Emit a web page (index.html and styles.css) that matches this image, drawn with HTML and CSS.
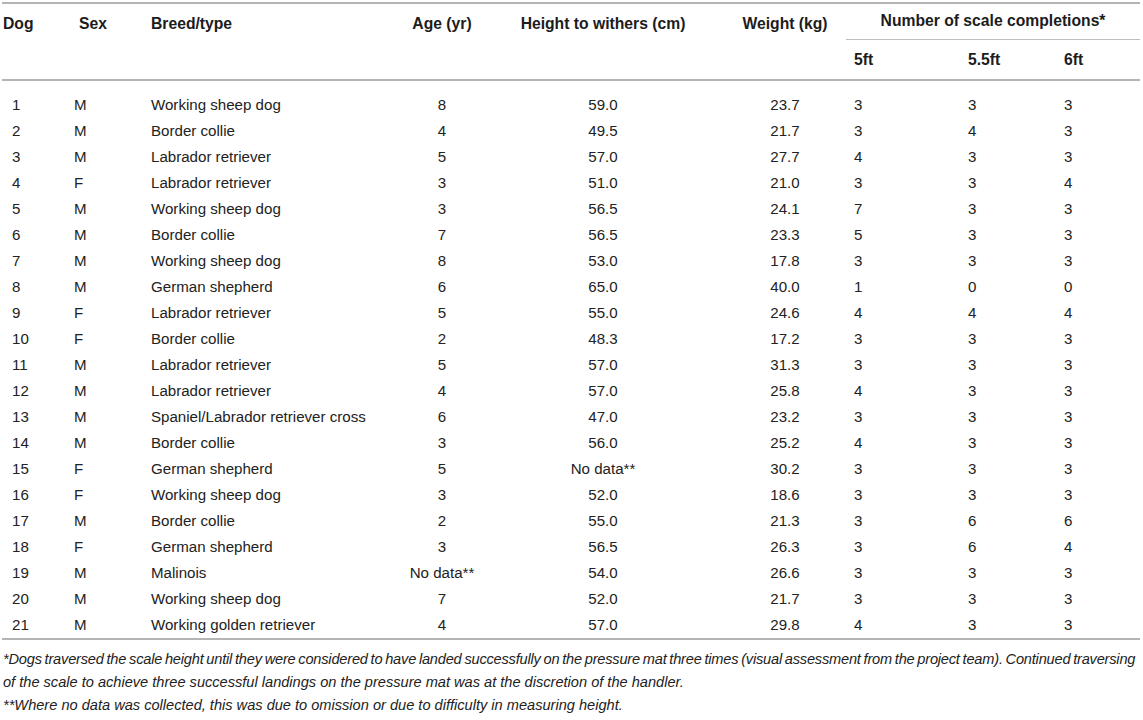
FILE: index.html
```html
<!DOCTYPE html>
<html lang="en">
<head>
<meta charset="utf-8">
<title>Dog data</title>
<link rel="stylesheet" href="styles.css">
</head>
<body>
<div class="page">
<table class="data">
  <colgroup>
    <col class="c-dog"><col class="c-sex"><col class="c-breed"><col class="c-age"><col class="c-height"><col class="c-weight"><col class="c-s1"><col class="c-s2"><col class="c-s3">
  </colgroup>
  <thead>
    <tr class="h1">
      <th rowspan="2" class="l first">Dog</th>
      <th rowspan="2" class="l sex">Sex</th>
      <th rowspan="2" class="l">Breed/type</th>
      <th rowspan="2" class="c">Age (yr)</th>
      <th rowspan="2" class="c">Height to withers (cm)</th>
      <th rowspan="2" class="c">Weight (kg)</th>
      <th colspan="3" class="group">Number of scale completions*</th>
    </tr>
    <tr class="h2">
      <th class="s">5ft</th>
      <th class="s">5.5ft</th>
      <th class="s">6ft</th>
    </tr>
  </thead>
  <tbody>
    <tr><td class="n">1</td><td class="l">M</td><td class="l">Working sheep dog</td><td class="c">8</td><td class="c">59.0</td><td class="c">23.7</td><td class="s">3</td><td class="s">3</td><td class="s">3</td></tr>
    <tr><td class="n">2</td><td class="l">M</td><td class="l">Border collie</td><td class="c">4</td><td class="c">49.5</td><td class="c">21.7</td><td class="s">3</td><td class="s">4</td><td class="s">3</td></tr>
    <tr><td class="n">3</td><td class="l">M</td><td class="l">Labrador retriever</td><td class="c">5</td><td class="c">57.0</td><td class="c">27.7</td><td class="s">4</td><td class="s">3</td><td class="s">3</td></tr>
    <tr><td class="n">4</td><td class="l">F</td><td class="l">Labrador retriever</td><td class="c">3</td><td class="c">51.0</td><td class="c">21.0</td><td class="s">3</td><td class="s">3</td><td class="s">4</td></tr>
    <tr><td class="n">5</td><td class="l">M</td><td class="l">Working sheep dog</td><td class="c">3</td><td class="c">56.5</td><td class="c">24.1</td><td class="s">7</td><td class="s">3</td><td class="s">3</td></tr>
    <tr><td class="n">6</td><td class="l">M</td><td class="l">Border collie</td><td class="c">7</td><td class="c">56.5</td><td class="c">23.3</td><td class="s">5</td><td class="s">3</td><td class="s">3</td></tr>
    <tr><td class="n">7</td><td class="l">M</td><td class="l">Working sheep dog</td><td class="c">8</td><td class="c">53.0</td><td class="c">17.8</td><td class="s">3</td><td class="s">3</td><td class="s">3</td></tr>
    <tr><td class="n">8</td><td class="l">M</td><td class="l">German shepherd</td><td class="c">6</td><td class="c">65.0</td><td class="c">40.0</td><td class="s">1</td><td class="s">0</td><td class="s">0</td></tr>
    <tr><td class="n">9</td><td class="l">F</td><td class="l">Labrador retriever</td><td class="c">5</td><td class="c">55.0</td><td class="c">24.6</td><td class="s">4</td><td class="s">4</td><td class="s">4</td></tr>
    <tr><td class="n">10</td><td class="l">F</td><td class="l">Border collie</td><td class="c">2</td><td class="c">48.3</td><td class="c">17.2</td><td class="s">3</td><td class="s">3</td><td class="s">3</td></tr>
    <tr><td class="n">11</td><td class="l">M</td><td class="l">Labrador retriever</td><td class="c">5</td><td class="c">57.0</td><td class="c">31.3</td><td class="s">3</td><td class="s">3</td><td class="s">3</td></tr>
    <tr><td class="n">12</td><td class="l">M</td><td class="l">Labrador retriever</td><td class="c">4</td><td class="c">57.0</td><td class="c">25.8</td><td class="s">4</td><td class="s">3</td><td class="s">3</td></tr>
    <tr><td class="n">13</td><td class="l">M</td><td class="l">Spaniel/Labrador retriever cross</td><td class="c">6</td><td class="c">47.0</td><td class="c">23.2</td><td class="s">3</td><td class="s">3</td><td class="s">3</td></tr>
    <tr><td class="n">14</td><td class="l">M</td><td class="l">Border collie</td><td class="c">3</td><td class="c">56.0</td><td class="c">25.2</td><td class="s">4</td><td class="s">3</td><td class="s">3</td></tr>
    <tr><td class="n">15</td><td class="l">F</td><td class="l">German shepherd</td><td class="c">5</td><td class="c">No data**</td><td class="c">30.2</td><td class="s">3</td><td class="s">3</td><td class="s">3</td></tr>
    <tr><td class="n">16</td><td class="l">F</td><td class="l">Working sheep dog</td><td class="c">3</td><td class="c">52.0</td><td class="c">18.6</td><td class="s">3</td><td class="s">3</td><td class="s">3</td></tr>
    <tr><td class="n">17</td><td class="l">M</td><td class="l">Border collie</td><td class="c">2</td><td class="c">55.0</td><td class="c">21.3</td><td class="s">3</td><td class="s">6</td><td class="s">6</td></tr>
    <tr><td class="n">18</td><td class="l">F</td><td class="l">German shepherd</td><td class="c">3</td><td class="c">56.5</td><td class="c">26.3</td><td class="s">3</td><td class="s">6</td><td class="s">4</td></tr>
    <tr><td class="n">19</td><td class="l">M</td><td class="l">Malinois</td><td class="c">No data**</td><td class="c">54.0</td><td class="c">26.6</td><td class="s">3</td><td class="s">3</td><td class="s">3</td></tr>
    <tr><td class="n">20</td><td class="l">M</td><td class="l">Working sheep dog</td><td class="c">7</td><td class="c">52.0</td><td class="c">21.7</td><td class="s">3</td><td class="s">3</td><td class="s">3</td></tr>
    <tr><td class="n">21</td><td class="l">M</td><td class="l">Working golden retriever</td><td class="c">4</td><td class="c">57.0</td><td class="c">29.8</td><td class="s">4</td><td class="s">3</td><td class="s">3</td></tr>
  </tbody>
</table>
<div class="notes">
  <p><span class="line">*Dogs traversed the scale height until they were considered to have landed successfully on the pressure mat three times (visual assessment from the project team). Continued traversing</span><br>of the scale to achieve three successful landings on the pressure mat was at the discretion of the handler.</p>
  <p>**Where no data was collected, this was due to omission or due to difficulty in measuring height.</p>
</div>
</div>
</body>
</html>
```

FILE: styles.css
```css
html, body {
  margin: 0;
  padding: 0;
  background: #ffffff;
}

.page {
  padding: 2px 3px 0 2px;
  font-family: "Liberation Sans", Arial, sans-serif;
  color: #222222;
}

.data {
  width: 1138px;
  border-collapse: collapse;
  table-layout: fixed;
  font-size: 15.1px;
}

.c-dog { width: 71px; }
.c-sex { width: 77px; }
.c-breed { width: 252px; }
.c-age { width: 80px; }
.c-height { width: 242px; }
.c-weight { width: 122px; }
.c-s1 { width: 114px; }
.c-s2 { width: 96px; }
.c-s3 { width: 84px; }

.data thead {
  border-top: 2px solid #b4b4b4;
  border-bottom: 2px solid #b4b4b4;
}

.data th {
  font-weight: bold;
  font-size: 15.7px;
  color: #1c1c1c;
  line-height: 18px;
  white-space: nowrap;
}

.data th.l, .data th.c {
  vertical-align: top;
  padding: 11px 0 0 1px;
}

.data th.sex {
  padding-left: 6px;
}

.data th.c {
  text-align: center;
  padding-left: 0;
}

.data th.l {
  text-align: left;
}

.h1 .group {
  height: 36px;
  box-sizing: border-box;
  padding: 0;
  text-align: center;
  vertical-align: middle;
  border-bottom: 1px solid #bdbdbd;
}

.h2 th.s {
  height: 39px;
  box-sizing: border-box;
  text-align: left;
  padding: 11px 0 10px 8px;
  vertical-align: top;
}

.data tbody {
  border-bottom: 2px solid #b4b4b4;
}

.data td {
  height: 26px;
  padding: 0;
  line-height: 18px;
  vertical-align: middle;
  white-space: nowrap;
}

.data tbody tr:first-child td {
  padding-top: 11px;
}

.data td.n {
  text-align: left;
  padding-left: 10px;
}

.data td.l {
  text-align: left;
  padding-left: 1px;
}

.data td.c {
  text-align: center;
}

.data td.s {
  text-align: left;
  padding-left: 8px;
}

.notes {
  margin-top: 8px;
  font-size: 14.6px;
  font-style: italic;
  line-height: 23px;
  color: #222222;
  padding-left: 1px;
}

.notes p {
  margin: 0;
}

.notes .line {
  white-space: nowrap;
  letter-spacing: -0.2px;
  word-spacing: -1px;
}
```
